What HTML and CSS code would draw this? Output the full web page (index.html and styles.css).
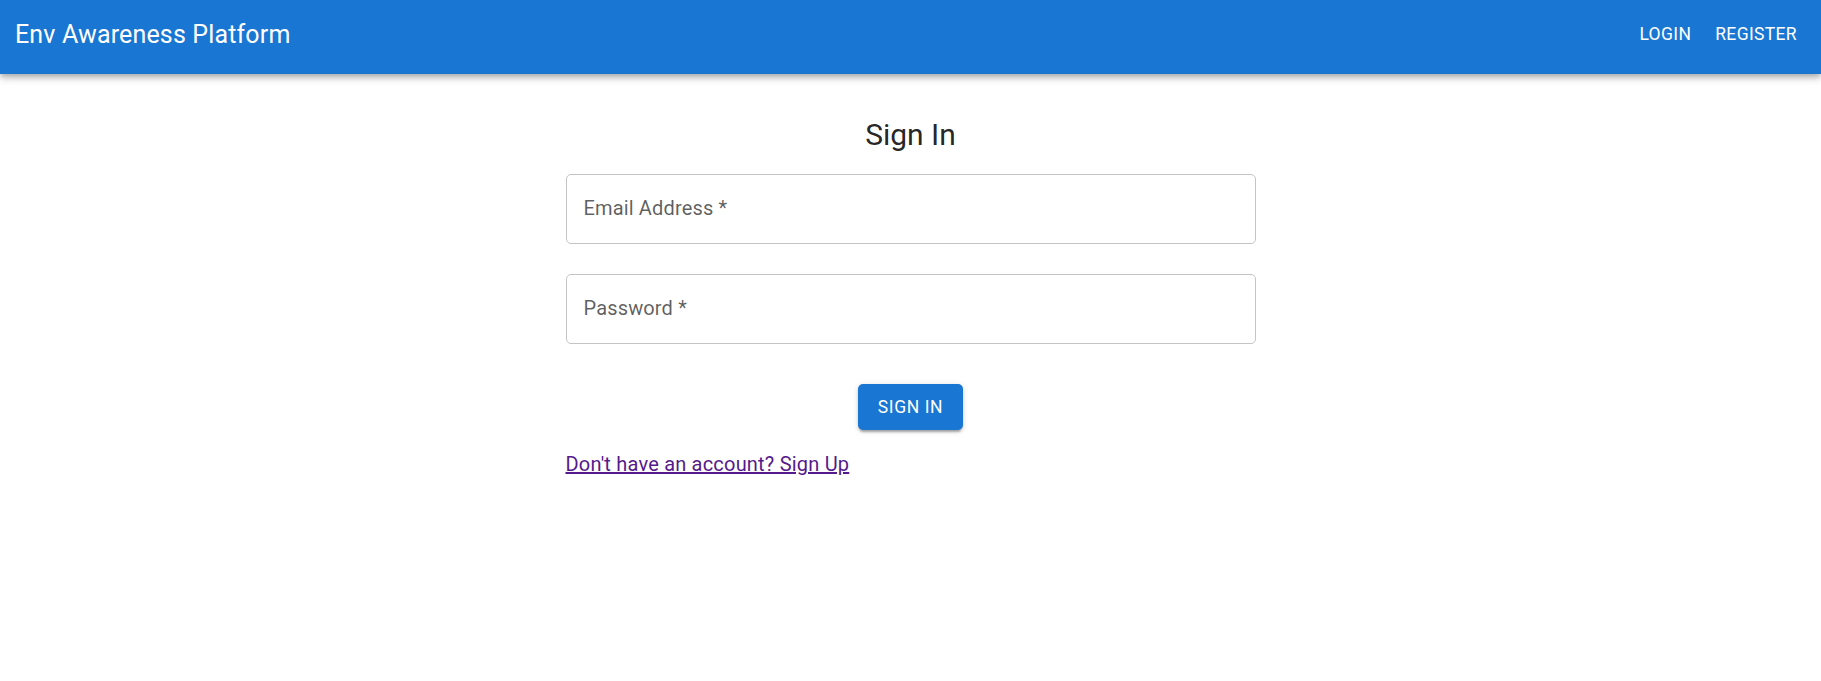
FILE: index.html
```html
<!DOCTYPE html>
<html lang="en">
<head>
<meta charset="utf-8">
<title>Env Awareness Platform</title>
<link rel="stylesheet" href="styles.css">
</head>
<body>
<header class="appbar">
  <div class="toolbar">
    <div class="brand">Env Awareness Platform</div>
    <nav class="nav">
      <a class="nav-btn" href="#">Login</a>
      <a class="nav-btn" href="#">Register</a>
    </nav>
  </div>
</header>
<main class="container">
  <h1 class="title">Sign In</h1>
  <form class="form">
    <div class="field">
      <span class="label">Email Address *</span>
    </div>
    <div class="field">
      <span class="label">Password *</span>
    </div>
    <div class="actions">
      <button type="button" class="submit">Sign In</button>
    </div>
    <a class="link" href="#">Don't have an account? Sign Up</a>
  </form>
</main>
</body>
</html>
```

FILE: styles.css
```css
* { box-sizing: border-box; }
html, body {
  margin: 0;
  padding: 0;
  background: #ffffff;
  font-family: Roboto, "Liberation Sans", Arial, sans-serif;
  color: rgba(0,0,0,0.87);
}
.appbar {
  height: 74px;
  background: #1976d2;
  color: #ffffff;
  box-shadow: 0 2px 5px -1px rgba(0,0,0,0.2), 0 5px 6px 0 rgba(0,0,0,0.14), 0 1px 12px 0 rgba(0,0,0,0.12);
  position: relative;
  z-index: 2;
}
.toolbar {
  height: 100%;
  display: flex;
  align-items: center;
  justify-content: space-between;
  padding: 0 14px 5px 15px;
}
.brand {
  font-size: 25px;
  font-weight: 400;
  line-height: 40px;
  letter-spacing: 0.15px;
}
.nav {
  display: flex;
  gap: 4px;
}
.nav-btn {
  color: #ffffff;
  text-decoration: none;
  text-transform: uppercase;
  font-size: 17.5px;
  font-weight: 400;
  letter-spacing: 0.35px;
  line-height: 30.6px;
  padding: 7.5px 10px;
  border-radius: 5px;
}
.container {
  width: 690px;
  margin: 0 auto;
  padding-top: 41px;
}
.title {
  margin: 0;
  text-align: center;
  font-size: 30px;
  font-weight: 400;
  line-height: 40px;
  color: rgba(0,0,0,0.87);
}
.form {
  display: flex;
  flex-direction: column;
}
.field {
  margin-top: 19px;
  margin-bottom: 8px;
  height: 70px;
  border: 1px solid #c4c4c4;
  border-radius: 5px;
  display: flex;
  align-items: center;
  padding: 0 17px 2px;
}
.field + .field { margin-top: 22px; }
.label {
  font-size: 20px;
  line-height: 28px;
  color: rgba(0,0,0,0.64);
  letter-spacing: 0.15px;
}
.actions {
  display: flex;
  justify-content: center;
  margin-top: 32px;
  margin-bottom: 19px;
}
.submit {
  height: 46px;
  padding: 0 20px;
  border: 0;
  border-radius: 5px;
  background: #1976d2;
  color: #ffffff;
  font-family: inherit;
  font-size: 17.5px;
  font-weight: 400;
  letter-spacing: 0.6px;
  text-transform: uppercase;
  box-shadow: 0 4px 2px -2px rgba(0,0,0,0.2), 0 2px 3px 0 rgba(0,0,0,0.14), 0 1px 6px 0 rgba(0,0,0,0.12);
  cursor: pointer;
}
.link {
  align-self: flex-start;
  font-size: 20px;
  line-height: 30px;
  color: #551a8b;
  text-decoration: underline;
  letter-spacing: 0.2px;
}
```
